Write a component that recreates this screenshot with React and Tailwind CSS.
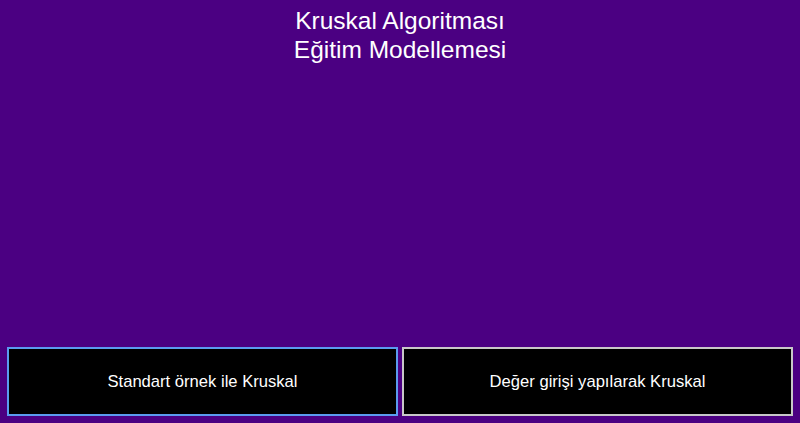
import React from "react";

const App = () => {
  return (
    <div className="h-screen w-full bg-[#4b0082] flex flex-col justify-between font-['Liberation_Sans',Arial,sans-serif] text-white">
      <h1 className="pt-[6px] text-center text-[24.5px] leading-[29px] font-normal">
        Kruskal Algoritması
        <br />
        Eğitim Modellemesi
      </h1>
      <div className="grid grid-cols-2 gap-[4px] px-[7px] pb-[7px]">
        <button className="h-[69px] pt-[2px] bg-black border-2 border-[#5b9bef] text-[16.6px] text-white">
          Standart örnek ile Kruskal
        </button>
        <button className="h-[69px] pt-[2px] bg-black border-2 border-[#c8c8c8] text-[16.6px] text-white">
          Değer girişi yapılarak Kruskal
        </button>
      </div>
    </div>
  );
};

export default App;
